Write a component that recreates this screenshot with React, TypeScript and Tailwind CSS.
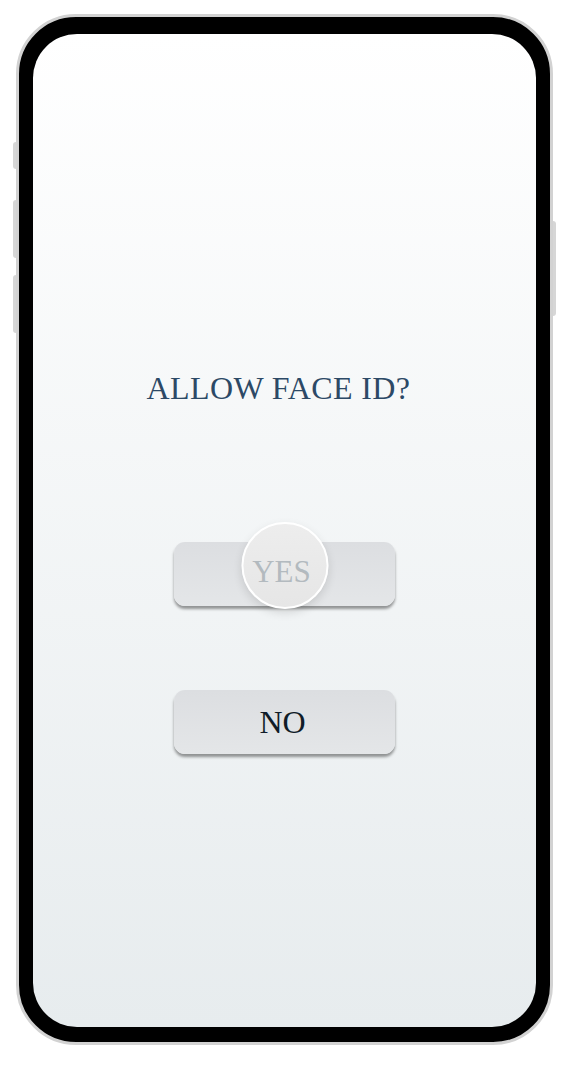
import React from "react";

export default function App() {
  const serif = { fontFamily: '"Liberation Serif", "Times New Roman", serif' };
  return (
    <div className="min-h-[1072px] w-[569px] bg-white pl-[16px] pt-[14px]">
      <div className="relative h-[1031px] w-[537px]">
        {/* side buttons */}
        <div className="absolute left-[-3px] top-[128px] h-[27px] w-[3px] rounded-l-sm bg-[#d6d6d6]" />
        <div className="absolute left-[-3px] top-[186px] h-[58px] w-[3px] rounded-l-sm bg-[#d6d6d6]" />
        <div className="absolute left-[-3px] top-[261px] h-[58px] w-[3px] rounded-l-sm bg-[#d6d6d6]" />
        <div className="absolute right-[-3px] top-[207px] h-[95px] w-[3px] rounded-r-sm bg-[#d6d6d6]" />

        <div className="h-full w-full rounded-[60px] border-[3px] border-[#d2d2d2] bg-black px-[14px] pb-[15px] pt-[17px]">
          <div
            className="flex h-full w-full flex-col items-center rounded-[44px] bg-gradient-to-b from-[#ffffff] to-[#e7ecee] pt-[338px]"
            style={serif}
          >
            <div className="mr-[12px] h-8 text-[32px] leading-none tracking-[0.4px] text-[#2c4966]">
              ALLOW FACE ID?
            </div>

            <div className="relative mt-[138px] h-[64px] w-[221px]">
              <div className="h-full w-full rounded-[11px] bg-gradient-to-b from-[#dcdee1] to-[#e4e6e8] shadow-[0_3px_3px_rgba(0,0,0,0.4)]" />
              <div className="absolute left-1/2 top-[-20px] flex h-[87px] w-[87px] -translate-x-1/2 items-center justify-center rounded-full border-2 border-white bg-gradient-to-b from-[#ededed] to-[#e6e6e6] pr-[6px] pt-[12px] shadow-[0_4px_10px_rgba(0,0,0,0.12)]">
                <span className="text-[31px] leading-none text-[#b3babf]">YES</span>
              </div>
            </div>

            <div className="mt-[84px] flex h-[64px] w-[221px] items-center justify-center rounded-[11px] bg-gradient-to-b from-[#dcdee1] to-[#e4e6e8] pr-[4px] shadow-[0_3px_3px_rgba(0,0,0,0.4)]">
              <span className="text-[32px] leading-none text-[#101c28]">NO</span>
            </div>
          </div>
        </div>
      </div>
    </div>
  );
}
